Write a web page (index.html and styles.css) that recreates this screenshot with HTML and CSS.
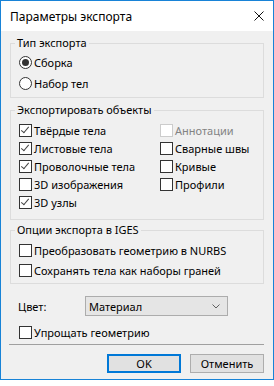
FILE: index.html
```html
<!DOCTYPE html>
<html>

<head>
  <title>Параметры экспорта</title>
  <link rel="stylesheet" href="styles.css">
</head>

<body>
  <div class="window">
    <div class="titlebar">
      <span class="title">Параметры экспорта</span>
      <svg class="close" width="10" height="10" viewBox="0 0 10 10">
        <path d="M0.5 0.5 L9.5 9.5 M9.5 0.5 L0.5 9.5" stroke="#111" stroke-width="1" fill="none" />
      </svg>
    </div>

    <div class="content">
      <fieldset class="group">
        <legend>Тип экспорта</legend>
        <div class="group-body type-body">
          <div class="opt"><span class="radio checked"></span>Сборка</div>
          <div class="opt"><span class="radio"></span>Набор тел</div>
        </div>
      </fieldset>

      <fieldset class="group objects">
        <legend>Экспортировать объекты</legend>
        <div class="group-body objects-body">
          <div class="opt"><span class="box checked"></span>Твёрдые тела</div>
          <div class="opt disabled"><span class="box"></span>Аннотации</div>
          <div class="opt"><span class="box checked"></span>Листовые тела</div>
          <div class="opt"><span class="box"></span>Сварные швы</div>
          <div class="opt"><span class="box checked"></span>Проволочные тела</div>
          <div class="opt"><span class="box"></span>Кривые</div>
          <div class="opt"><span class="box"></span>3D изображения</div>
          <div class="opt"><span class="box"></span>Профили</div>
          <div class="opt"><span class="box checked"></span>3D узлы</div>
        </div>
      </fieldset>

      <fieldset class="group iges">
        <legend>Опции экспорта в IGES</legend>
        <div class="group-body iges-body">
          <div class="opt"><span class="box"></span>Преобразовать геометрию в NURBS</div>
          <div class="opt"><span class="box"></span>Сохранять тела как наборы граней</div>
        </div>
      </fieldset>

      <div class="color-row">
        <span class="color-label">Цвет:</span>
        <div class="combo">
          <span>Материал</span>
          <svg width="8" height="5" viewBox="0 0 8 5">
            <path d="M0.5 0.5 L4 4 L7.5 0.5" stroke="#606060" stroke-width="1" fill="none" />
          </svg>
        </div>
      </div>

      <div class="opt simplify"><span class="box"></span>Упрощать геометрию</div>

      <div class="sep"></div>

      <div class="buttons">
        <button class="btn default">OK</button>
        <button class="btn">Отменить</button>
      </div>
    </div>
  </div>
</body>

</html>
```

FILE: styles.css
```css
body {
  margin: 0;
  background-color: #fff;
  font-family: 'Noto Sans', 'Open Sans', sans-serif;
  font-size: 11px;
  color: #000;
}

/* Window frame */
.window {
  width: 274px;
  height: 380px;
  box-sizing: border-box;
  border: 1px solid #1883d7;
  background-color: #f0f0f0;
  display: flex;
  flex-direction: column;
}

.titlebar {
  height: 30px;
  flex: none;
  background-color: #fff;
  display: flex;
  align-items: center;
  justify-content: space-between;
  padding: 0 9px;
}

.title {
  font-size: 12px;
}

.content {
  flex: 1;
  padding: 5px 9px 0;
  display: flex;
  flex-direction: column;
}

/* Group boxes */
.group {
  margin: 0;
  padding: 0;
  border: 1px solid #dcdcdc;
  min-inline-size: 0;
}

.group legend {
  margin-left: 4px;
  padding: 0 2px;
  line-height: 14px;
}

.objects {
  margin-top: 5px;
}

.iges {
  margin-top: 3px;
}

.group-body {
  padding-left: 8px;
}

.type-body {
  display: flex;
  flex-direction: column;
  gap: 5px;
  padding-top: 4px;
  padding-bottom: 6px;
}

.objects-body {
  display: grid;
  grid-template-columns: 141px 1fr;
  grid-auto-rows: 16px;
  row-gap: 2px;
  padding-top: 5px;
  padding-bottom: 9px;
}

.iges-body {
  display: flex;
  flex-direction: column;
  gap: 4px;
  padding-top: 5px;
  padding-bottom: 5px;
}

/* Checkbox and radio rows */
.opt {
  display: flex;
  align-items: center;
  height: 16px;
  white-space: nowrap;
}

.box,
.radio {
  width: 13px;
  height: 13px;
  box-sizing: border-box;
  border: 1px solid #333;
  background-color: #fff;
  margin-right: 2px;
  flex: none;
  position: relative;
}

.radio {
  border-radius: 50%;
}

.radio.checked::after {
  content: "";
  position: absolute;
  left: 2px;
  top: 2px;
  width: 7px;
  height: 7px;
  border-radius: 50%;
  background-color: #333;
}

.box.checked::after {
  content: "";
  position: absolute;
  left: 3px;
  top: 0px;
  width: 3px;
  height: 7px;
  border: solid #444;
  border-width: 0 1px 1px 0;
  transform: rotate(40deg);
}

.disabled {
  color: #838383;
}

.disabled .box {
  border-color: #cccccc;
}

/* Colour row */
.color-row {
  display: flex;
  align-items: center;
  margin-top: 12px;
  padding-left: 8px;
}

.color-label {
  width: 67px;
}

.combo {
  width: 143px;
  height: 20px;
  box-sizing: border-box;
  border: 1px solid #acacac;
  background-color: #e5e5e5;
  display: flex;
  align-items: center;
  justify-content: space-between;
  padding: 0 7px 0 3px;
}

.simplify {
  margin-top: 8px;
  padding-left: 9px;
}

.sep {
  margin-top: 4px;
  margin-left: -1px;
  height: 1px;
  background-color: #a0a0a0;
}

/* Dialog buttons */
.buttons {
  margin-top: 9px;
  display: flex;
  justify-content: flex-end;
  gap: 9px;
}

.btn {
  width: 74px;
  height: 19px;
  box-sizing: border-box;
  border: 1px solid #adadad;
  background-color: #e1e1e1;
  font-family: inherit;
  font-size: 11px;
  color: #000;
  padding: 0;
}

.btn.default {
  border: 2px solid #0078d7;
}
```
